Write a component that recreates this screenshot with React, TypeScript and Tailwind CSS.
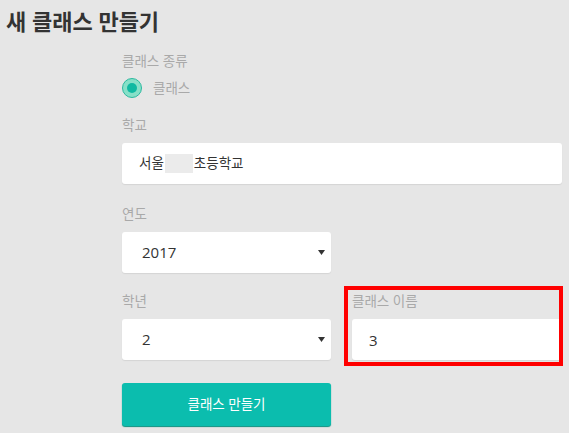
import { useState } from 'react';

const font = 'font-["Open_Sans","Noto_Sans_CJK_KR",sans-serif]';

function Label({ children }: { children: React.ReactNode }) {
  return <div className="mb-2 h-5 text-[13.5px] leading-5 text-[#a9a9a9]">{children}</div>;
}

function SelectBox({ value, options }: { value: string; options: string[] }) {
  const [val, setVal] = useState(value);
  return (
    <div className="relative h-[41px] w-full">
      <select
        value={val}
        onChange={(e) => setVal(e.target.value)}
        className="h-full w-full appearance-none rounded-[3px] bg-white pl-5 text-[15px] text-[#333] shadow-[0_1px_1px_#d4d4d4] outline-none"
      >
        {options.map((o) => (
          <option key={o} value={o}>
            {o}
          </option>
        ))}
      </select>
      <svg className="pointer-events-none absolute right-[6px] top-[18px]" width="7" height="5" viewBox="0 0 7 5">
        <path d="M0 0h7L3.5 5z" fill="#333" />
      </svg>
    </div>
  );
}

export default function App() {
  const [className, setClassName] = useState('3');

  return (
    <div className={`min-h-screen bg-[#e6e6e6] ${font}`}>
      {/* title */}
      <h1 className="pl-[6px] pt-[5px] text-[22px] font-bold leading-8 text-[#333]">새 클래스 만들기</h1>

      <div className="ml-[122px] w-[440px] pt-[14px]">
        {/* class type */}
        <div className="mb-[7px] h-5 text-[13.5px] leading-5 text-[#a9a9a9]">클래스 종류</div>
        <div className="flex h-5 items-center gap-[11px]">
          <span className="flex h-5 w-5 items-center justify-center rounded-full border border-[#2cb99f] bg-[#86e0c8]">
            <span className="h-[10px] w-[10px] rounded-full bg-[#10b9a2]" />
          </span>
          <span className="text-[13.5px] text-[#a9a9a9]">클래스</span>
        </div>

        {/* school */}
        <div className="mt-[17px]">
          <Label>학교</Label>
          <div className="flex h-[41px] items-center rounded-[3px] bg-white pl-[17px] text-[13.5px] text-[#333] shadow-[0_1px_1px_#d4d4d4]">
            <span>서울</span>
            <span className="mx-[1px] h-[19px] w-[28px] bg-[#ebebeb]" />
            <span>초등학교</span>
          </div>
        </div>

        {/* year */}
        <div className="mt-[20px] w-[209px]">
          <Label>연도</Label>
          <SelectBox value="2017" options={['2016', '2017', '2018']} />
        </div>

        {/* grade + class name */}
        <div className="mt-[18px] grid grid-cols-[209px_210px] gap-x-[21px]">
          <div>
            <Label>학년</Label>
            <SelectBox value="2" options={['1', '2', '3', '4', '5', '6']} />
          </div>
          <div className="relative">
            <Label>클래스 이름</Label>
            <input
              value={className}
              onChange={(e) => setClassName(e.target.value)}
              className="h-[41px] w-full rounded-[3px] bg-white pl-[17px] text-[15px] text-[#333] shadow-[0_1px_1px_#d4d4d4] outline-none"
            />
            {/* highlight */}
            <div className="pointer-events-none absolute -bottom-[6px] -left-[8px] -right-[1px] -top-[5px] border-4 border-[#ff0000]" />
          </div>
        </div>

        <button className="mt-[23px] h-[43px] w-[209px] rounded-[3px] bg-[#0bbdae] text-[13.5px] text-white shadow-[0_1px_1px_#08907f]">
          클래스 만들기
        </button>
      </div>
    </div>
  );
}
